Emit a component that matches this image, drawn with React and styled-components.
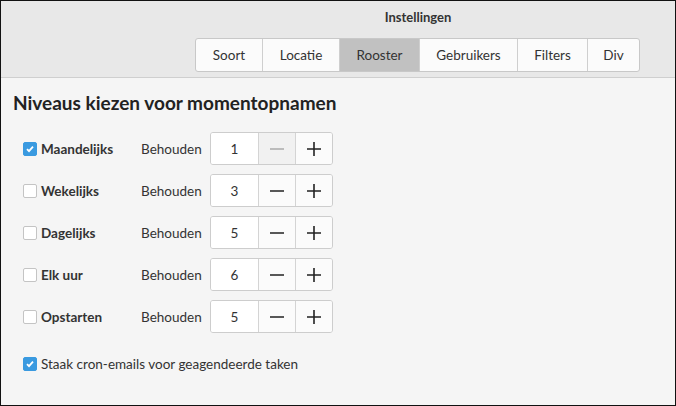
import React from "react";
import styled, { createGlobalStyle } from "styled-components";

const G = createGlobalStyle`
  html,body{margin:0;padding:0;}
  body{font-family:Lato,"Noto Sans",sans-serif;color:#333;}
`;
const Win = styled.div`
  width:676px;height:406px;box-sizing:border-box;border:1px solid #111;
  display:flex;flex-direction:column;background:#f5f5f5;
`;
const Header = styled.div`
  height:77px;background:#e8e8e8;border-bottom:1px solid #cfcfcf;
  display:flex;flex-direction:column;align-items:flex-end;padding-right:35px;box-sizing:border-box;
`;
const Title = styled.div`
  align-self:stretch;padding-left:195px;text-align:center;font-weight:bold;font-size:13px;height:37px;line-height:32px;
`;
const Tabs = styled.div`
  display:flex;border:1px solid #c8c8c8;border-radius:3px;overflow:hidden;height:32px;background:#fbfbfb;
`;
const Tab = styled.div`
  width:${p=>p.w}px;box-sizing:border-box;display:flex;align-items:center;justify-content:center;
  font-size:13.5px;border-left:${p=>p.first?"none":"1px solid #cfcfcf"};
  background:${p=>p.active?"#c1c1c1":"transparent"};
`;
const Body = styled.div`padding:13px 0 0 12px;display:flex;flex-direction:column;`;
const H = styled.div`font-size:19px;font-weight:bold;color:#222;margin-bottom:18px;`;
const Row = styled.div`display:flex;align-items:center;height:33px;margin-bottom:9px;padding-left:10px;`;
const Box = styled.span`
  width:14px;height:14px;border-radius:2px;box-sizing:border-box;display:inline-flex;align-items:center;justify-content:center;
  background:${p=>p.on?"#3a9ae0":"#fff"};border:1px solid ${p=>p.on?"#3a9ae0":"#c4c4c4"};margin-right:4px;flex:none;
`;
const Label = styled.span`font-size:13.5px;font-weight:${p=>p.bold?"bold":"normal"};width:${p=>p.w||"auto"};`;
const Spin = styled.div`display:flex;height:33px;border:1px solid #cdcdcd;border-radius:3px;overflow:hidden;box-sizing:border-box;margin-left:5px;`;
const Entry = styled.div`width:47px;background:#fff;display:flex;align-items:center;justify-content:center;font-size:13.5px;`;
const Btn = styled.div`
  width:36px;display:flex;align-items:center;justify-content:center;border-left:1px solid #d4d4d4;
  background:${p=>p.dis?"#f1f1f1":"#fbfbfb"};
`;
const Check = () => (<svg width="10" height="10" viewBox="0 0 10 10"><path d="M2 5.2l2 2 4-4.6" stroke="#fff" strokeWidth="1.8" fill="none"/></svg>);
const Minus = ({c}) => (<svg width="16" height="16"><path d="M1 8h14" stroke={c} strokeWidth="1.6"/></svg>);
const Plus = () => (<svg width="16" height="16"><path d="M1 8h14M8 1v14" stroke="#222" strokeWidth="1.6"/></svg>);

const rows=[["Maandelijks","1",true],["Wekelijks","3"],["Dagelijks","5"],["Elk uur","6"],["Opstarten","5"]];
const tabs=[["Soort",66],["Locatie",77],["Rooster",80],["Gebruikers",98],["Filters",70],["Div",52]];

export default function App(){
  return <Win><G/>
    <Header>
      <Title>Instellingen</Title>
      <Tabs>{tabs.map(([t,w],i)=><Tab key={t} w={w} first={i===0} active={t==="Rooster"}>{t}</Tab>)}</Tabs>
    </Header>
    <Body>
      <H>Niveaus kiezen voor momentopnamen</H>
      {rows.map(([n,v,on])=><Row key={n}>
        <Box on={on}>{on&&<Check/>}</Box>
        <Label bold w="100px">{n}</Label>
        <Label w="64px">Behouden</Label>
        <Spin><Entry>{v}</Entry><Btn dis={on}><Minus c={on?"#aaa":"#222"}/></Btn><Btn><Plus/></Btn></Spin>
      </Row>)}
      <Row style={{marginTop:5}}><Box on><Check/></Box><Label>Staak cron-emails voor geagendeerde taken</Label></Row>
    </Body>
  </Win>;
}
